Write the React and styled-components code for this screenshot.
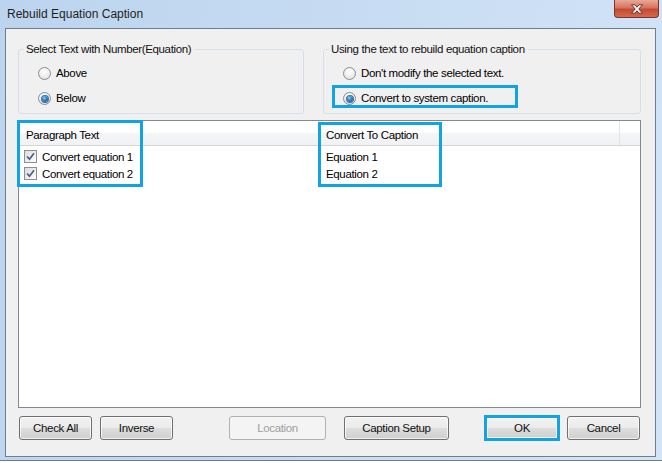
import React from 'react'
import styled, { createGlobalStyle } from 'styled-components'

const HIGHLIGHT = '#12a2e6'

const GlobalStyle = createGlobalStyle`
  html, body {
    margin: 0;
    padding: 0;
    background: #ffffff;
  }
  body {
    font-family: "Liberation Sans", Arial, sans-serif;
    font-size: 11.5px;
    letter-spacing: -0.35px;
    color: #000;
  }
`

const Window = styled.div`
  width: 662px;
  height: 461px;
  box-sizing: border-box;
  display: flex;
  flex-direction: column;
  padding: 0 6px 4px 5px;
  background: linear-gradient(100deg, #bcd4ee 0%, #c6dbf2 45%, #d3e4f7 100%);
  border-bottom: 1px solid #6e7a89;
  box-shadow: 0 1px 2px rgba(0, 0, 0, 0.35);
`

const TitleBar = styled.div`
  height: 28px;
  flex-shrink: 0;
  display: flex;
  align-items: flex-start;
  justify-content: space-between;
`

const Title = styled.div`
  padding: 7px 0 0 2px;
  font-size: 12px;
  letter-spacing: 0;
  line-height: 14px;
  color: #1e1e1e;
`

const CloseButton = styled.div`
  width: 45px;
  height: 18px;
  margin: 0 -3px 0 0;
  box-sizing: border-box;
  border: 1px solid #7d3428;
  border-top: none;
  border-radius: 0 0 4px 4px;
  background: linear-gradient(#e8a896 0%, #d8735f 45%, #c44a33 55%, #d36a4f 100%);
  display: flex;
  align-items: center;
  justify-content: center;
`

const Client = styled.div`
  flex: 1;
  display: flex;
  flex-direction: column;
  background: #f0f0f0;
  border: 1px solid #6f7d8e;
  padding: 13px 14px 15px 12px;
`

const GroupRow = styled.div`
  display: flex;
  gap: 19px;
  padding-left: 0;
  height: 72px;
  flex-shrink: 0;
`

const GroupBox = styled.fieldset`
  width: ${p => p.$width}px;
  box-sizing: border-box;
  margin: 0;
  padding: 11px 0 0 19px;
  border: 1px solid #d5dfe5;
  border-radius: 3px;
  display: flex;
  flex-direction: column;
  gap: 12px;
`

const Legend = styled.legend`
  margin-left: -14px;
  padding: 0 3px 0 2px;
  line-height: 14px;
  color: #111;
`

const RadioRow = styled.label`
  position: relative;
  display: flex;
  align-items: center;
  gap: 5px;
  height: 13px;
  line-height: 13px;
`

const RadioCircle = styled.span`
  width: 13px;
  height: 13px;
  box-sizing: border-box;
  border-radius: 50%;
  border: 1px solid #8a8c8e;
  background: radial-gradient(circle at 50% 35%, #ffffff 0%, #f1f1f1 45%, #d9d9d9 100%);
  display: flex;
  align-items: center;
  justify-content: center;
  flex-shrink: 0;
`

const RadioDot = styled.span`
  width: 6px;
  height: 6px;
  border-radius: 50%;
  background: radial-gradient(circle at 40% 35%, #8fd0f5 0%, #2a7fc0 45%, #12477a 100%);
  box-shadow: 0 0 0 1px #3d6f9e;
`

const RadioHighlight = styled.span`
  position: absolute;
  left: -11px;
  top: -7px;
  width: 186px;
  height: 23px;
  box-sizing: border-box;
  border: 3px solid ${HIGHLIGHT};
  pointer-events: none;
`

const ListView = styled.div`
  position: relative;
  margin-top: 6px;
  height: 288px;
  flex-shrink: 0;
  box-sizing: border-box;
  border: 1px solid #828790;
  background: #fff;
  display: flex;
  flex-direction: column;
`

const Header = styled.div`
  display: flex;
  height: 25px;
  box-sizing: border-box;
  border-bottom: 1px solid #d5d5d5;
  background: linear-gradient(#ffffff 0%, #ffffff 45%, #f3f4f6 55%, #f1f2f4 100%);
`

const HeaderCell = styled.div`
  width: ${p => (p.$width ? `${p.$width}px` : 'auto')};
  flex: ${p => (p.$width ? 'none' : '1')};
  box-sizing: border-box;
  padding: 3px 0 0 ${p => p.$pad}px;
  display: flex;
  align-items: center;
  border-right: ${p => (p.$last ? 'none' : '1px solid #e3e5e8')};
`

const Rows = styled.div`
  padding-top: 2px;
  display: flex;
  flex-direction: column;
`

const Row = styled.div`
  display: flex;
  height: 17px;
  align-items: center;
`

const Cell = styled.div`
  width: ${p => p.$width}px;
  box-sizing: border-box;
  padding-left: ${p => p.$pad}px;
  display: flex;
  align-items: center;
  gap: 5px;
  white-space: nowrap;
`

const CheckBox = styled.span`
  width: 13px;
  height: 13px;
  box-sizing: border-box;
  border: 1px solid #8e8f8f;
  background: linear-gradient(135deg, #dcdcdc 0%, #f4f4f4 70%, #ffffff 100%);
  display: flex;
  align-items: center;
  justify-content: center;
  flex-shrink: 0;
`

const ColumnHighlight = styled.div`
  position: absolute;
  left: ${p => p.$left}px;
  top: ${p => p.$top}px;
  width: ${p => p.$width}px;
  height: ${p => p.$height}px;
  box-sizing: border-box;
  border: 3px solid ${HIGHLIGHT};
  pointer-events: none;
`

const ButtonRow = styled.div`
  margin-top: 7px;
  display: flex;
  align-items: center;
  height: 26px;
  padding-left: 1px;
`

const Button = styled.button`
  width: ${p => p.$width}px;
  height: ${p => (p.$highlight ? 26 : 24)}px;
  margin-left: ${p => p.$gap || 0}px;
  box-sizing: border-box;
  border: ${p => (p.$highlight ? `3px solid ${HIGHLIGHT}` : p.disabled ? '1px solid #adb2b5' : '1px solid #707070')};
  border-radius: ${p => (p.$highlight ? 0 : 3)}px;
  background: ${p =>
    p.disabled
      ? '#f4f4f4'
      : 'linear-gradient(#f2f2f2 0%, #ebebeb 48%, #dddddd 52%, #cfcfcf 100%)'};
  box-shadow: ${p => (p.disabled ? 'none' : 'inset 0 0 0 1px rgba(255,255,255,0.7)')};
  font-family: inherit;
  font-size: inherit;
  letter-spacing: inherit;
  color: ${p => (p.disabled ? '#a0a0a0' : '#111')};
  padding: 0;
  line-height: 14px;
`

function Radio({ checked, label, highlight }) {
  return (
    <RadioRow>
      <RadioCircle>{checked && <RadioDot />}</RadioCircle>
      <span>{label}</span>
      {highlight && <RadioHighlight />}
    </RadioRow>
  )
}

function Check() {
  return (
    <CheckBox>
      <svg width="9" height="9" viewBox="0 0 9 9">
        <path d="M1 4.5 L3.5 7.2 L8 1.2" fill="none" stroke="#4a5f86" strokeWidth="1.7" />
      </svg>
    </CheckBox>
  )
}

const rows = [
  { text: 'Convert equation 1', caption: 'Equation 1' },
  { text: 'Convert equation 2', caption: 'Equation 2' },
]

export default function App() {
  return (
    <>
      <GlobalStyle />
      <Window>
        <TitleBar>
          <Title>Rebuild Equation Caption</Title>
          <CloseButton>
            <svg width="14" height="10" viewBox="0 0 14 10">
              <path
                d="M1.5 0.8 H5 L7 3.2 L9 0.8 H12.5 L8.8 5 L12.5 9.2 H9 L7 6.8 L5 9.2 H1.5 L5.2 5 Z"
                fill="#f4f4f4"
                stroke="#5a2a22"
                strokeWidth="0.9"
                strokeLinejoin="round"
              />
            </svg>
          </CloseButton>
        </TitleBar>
        <Client>
          <GroupRow>
            <GroupBox $width={286}>
              <Legend>Select Text with Number(Equation)</Legend>
              <Radio label="Above" />
              <Radio label="Below" checked />
            </GroupBox>
            <GroupBox $width={318}>
              <Legend>Using the text to rebuild equation caption</Legend>
              <Radio label="Don't modify the selected text." />
              <Radio label="Convert to system caption." checked highlight />
            </GroupBox>
          </GroupRow>
          <ListView>
            <Header>
              <HeaderCell $width={301} $pad={7}>Paragraph Text</HeaderCell>
              <HeaderCell $width={300} $pad={6}>Convert To Caption</HeaderCell>
              <HeaderCell $last />
            </Header>
            <Rows>
              {rows.map(r => (
                <Row key={r.text}>
                  <Cell $width={301} $pad={5}>
                    <Check />
                    <span>{r.text}</span>
                  </Cell>
                  <Cell $width={300} $pad={6}>{r.caption}</Cell>
                </Row>
              ))}
            </Rows>
            <ColumnHighlight $left={-2} $top={-1} $width={126} $height={67} />
            <ColumnHighlight $left={299} $top={1} $width={124} $height={65} />
          </ListView>
          <ButtonRow>
            <Button $width={73}>Check All</Button>
            <Button $width={73} $gap={8}>Inverse</Button>
            <Button $width={97} $gap={56} disabled>Location</Button>
            <Button $width={105} $gap={18}>Caption Setup</Button>
            <Button $width={76} $gap={35} $highlight>OK</Button>
            <Button $width={73} $gap={7}>Cancel</Button>
          </ButtonRow>
        </Client>
      </Window>
    </>
  )
}
